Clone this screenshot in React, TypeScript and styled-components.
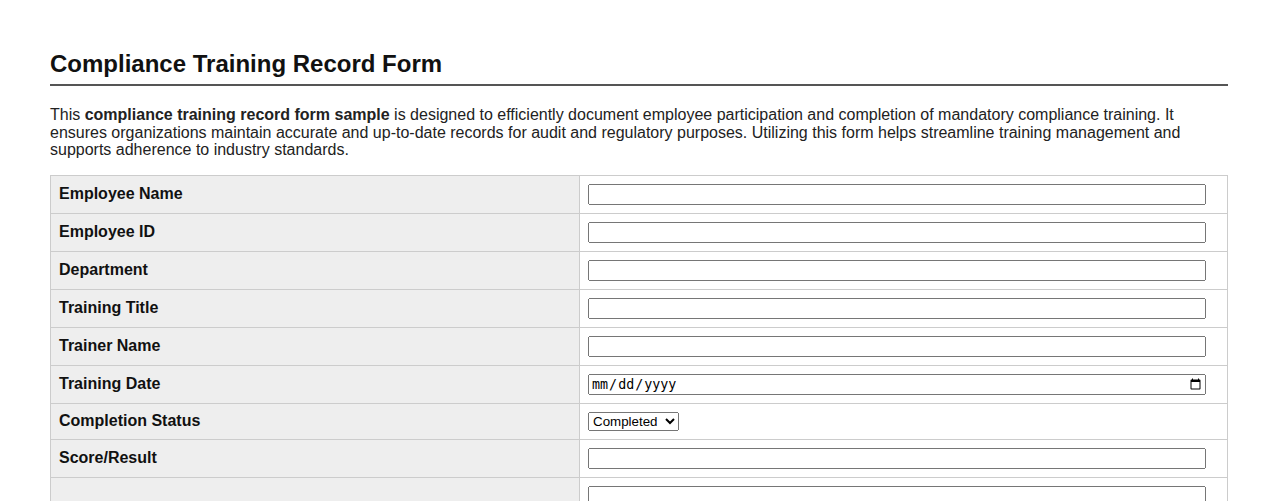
import React from "react";
import styled, { createGlobalStyle } from "styled-components";

const GlobalStyle = createGlobalStyle`
  body {
    margin: 0;
    background: #fff;
    font-family: "Liberation Sans", Arial, sans-serif;
    color: #222;
  }
`;

const Page = styled.div`
  padding: 50px 50px 40px;
`;

const Title = styled.h2`
  margin: 0;
  padding-bottom: 6px;
  font-size: 24px;
  font-weight: bold;
  color: #111;
  border-bottom: 2px solid #555;
`;

const Intro = styled.p`
  margin: 20px 0 16px;
  font-size: 16px;
  line-height: 17.5px;
  color: #222;
`;

const Table = styled.table`
  width: 100%;
  border-collapse: collapse;
  border: 1px solid #ccc;
`;

const Label = styled.th`
  width: 44.95%;
  padding: 8px;
  text-align: left;
  font-size: 16px;
  font-weight: bold;
  color: #111;
  background: #eee;
  border: 1px solid #ccc;
  vertical-align: middle;
`;

const Cell = styled.td`
  padding: 8px;
  border: 1px solid #ccc;
  vertical-align: middle;
`;

const Field = styled.input`
  width: calc(100% - 13px);
  box-sizing: border-box;
  margin: 0;
`;

const Select = styled.select`
  margin: 0;
`;

const Notes = styled.textarea`
  width: calc(100% - 13px);
  box-sizing: border-box;
  margin: 0;
  height: 60px;
  display: block;
`;

interface RowProps {
  label: string;
  children: React.ReactNode;
}

const Row = ({ label, children }: RowProps) => (
  <tr>
    <Label>{label}</Label>
    <Cell>{children}</Cell>
  </tr>
);

export default function App() {
  return (
    <>
      <GlobalStyle />
      <Page>
        <Title>Compliance Training Record Form</Title>
        <Intro>
          This <strong>compliance training record form sample</strong> is designed to efficiently
          document employee participation and completion of mandatory compliance training. It
          ensures organizations maintain accurate and up-to-date records for audit and regulatory
          purposes. Utilizing this form helps streamline training management and supports adherence
          to industry standards.
        </Intro>
        <Table>
          <tbody>
            <Row label="Employee Name"><Field type="text" /></Row>
            <Row label="Employee ID"><Field type="text" /></Row>
            <Row label="Department"><Field type="text" /></Row>
            <Row label="Training Title"><Field type="text" /></Row>
            <Row label="Trainer Name"><Field type="text" /></Row>
            <Row label="Training Date"><Field type="date" /></Row>
            <Row label="Completion Status">
              <Select defaultValue="Completed">
                <option>Completed</option>
                <option>In Progress</option>
                <option>Not Started</option>
              </Select>
            </Row>
            <Row label="Score/Result"><Field type="text" /></Row>
            <Row label="Comments"><Notes /></Row>
          </tbody>
        </Table>
      </Page>
    </>
  );
}
